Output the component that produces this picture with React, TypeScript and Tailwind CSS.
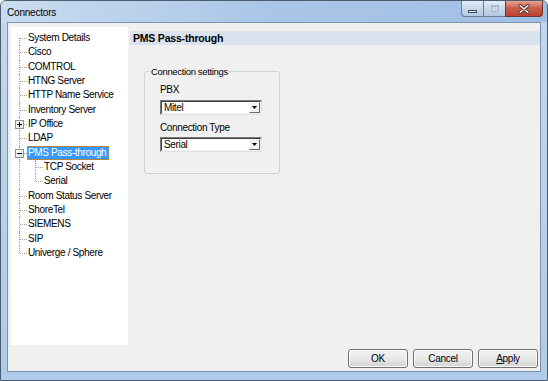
import React from 'react';

type Item = {
  label: string;
  level: 0 | 1;
  expander?: '+' | '-';
  selected?: boolean;
  rootLine: 'full' | 'top' | 'bottom';
  childLine?: 'full' | 'top';
};

const items: Item[] = [
  { label: 'System Details', level: 0, rootLine: 'bottom' },
  { label: 'Cisco', level: 0, rootLine: 'full' },
  { label: 'COMTROL', level: 0, rootLine: 'full' },
  { label: 'HTNG Server', level: 0, rootLine: 'full' },
  { label: 'HTTP Name Service', level: 0, rootLine: 'full' },
  { label: 'Inventory Server', level: 0, rootLine: 'full' },
  { label: 'IP Office', level: 0, rootLine: 'full', expander: '+' },
  { label: 'LDAP', level: 0, rootLine: 'full' },
  { label: 'PMS Pass-through', level: 0, rootLine: 'full', expander: '-', selected: true },
  { label: 'TCP Socket', level: 1, rootLine: 'full', childLine: 'full' },
  { label: 'Serial', level: 1, rootLine: 'full', childLine: 'top' },
  { label: 'Room Status Server', level: 0, rootLine: 'full' },
  { label: 'ShoreTel', level: 0, rootLine: 'full' },
  { label: 'SIEMENS', level: 0, rootLine: 'full' },
  { label: 'SIP', level: 0, rootLine: 'full' },
  { label: 'Univerge / Sphere', level: 0, rootLine: 'top' },
];

function LineCell({
  vert,
  horiz,
  expander,
}: {
  vert: 'full' | 'top' | 'bottom';
  horiz: boolean;
  expander?: '+' | '-';
}) {
  return (
    <div className="relative w-[16px] h-full shrink-0">
      {vert === 'full' && (
        <div className="absolute left-[8px] top-0 bottom-0 border-l border-dotted border-[#a0a0a0]" />
      )}
      {vert === 'top' && (
        <div className="absolute left-[8px] top-0 h-1/2 border-l border-dotted border-[#a0a0a0]" />
      )}
      {vert === 'bottom' && (
        <div className="absolute left-[8px] top-1/2 bottom-0 border-l border-dotted border-[#a0a0a0]" />
      )}
      {horiz && (
        <div className="absolute left-[9px] right-0 top-[7px] border-t border-dotted border-[#a0a0a0]" />
      )}
      {expander && (
        <div className="absolute left-[4px] top-[3px] w-[9px] h-[9px] border border-[#919191] bg-gradient-to-br from-white to-[#e2e2e2] flex items-center justify-center">
          <div className="relative w-[5px] h-[5px]">
            <div className="absolute left-0 right-0 top-[2px] h-[1px] bg-black" />
            {expander === '+' && <div className="absolute top-0 bottom-0 left-[2px] w-[1px] bg-black" />}
          </div>
        </div>
      )}
    </div>
  );
}

function TreeRow({ item }: { item: Item }) {
  return (
    <div className="flex h-[14.33px] items-stretch">
      {item.level === 0 ? (
        <LineCell vert={item.rootLine} horiz expander={item.expander} />
      ) : (
        <>
          <LineCell vert="full" horiz={false} />
          <LineCell vert={item.childLine ?? 'full'} horiz />
        </>
      )}
      <div
        className={
          item.selected
            ? 'flex items-center pl-0 pr-[2px] bg-[#3399ff] text-white border border-dotted border-[#c08a3c]'
            : 'flex items-center pl-[1px] pr-[3px] text-black'
        }
      >
        <span className="text-[10px] tracking-[-0.35px] leading-none whitespace-nowrap">{item.label}</span>
      </div>
    </div>
  );
}

function Select({ value }: { value: string }) {
  return (
    <div className="w-[102px] h-[15px] flex bg-white border border-t-[#7a7a7a] border-l-[#7a7a7a] border-r-[#e3e3e3] border-b-[#e3e3e3]">
      <div className="flex-1 flex border border-t-[#404040] border-l-[#404040] border-r-[#f0f0f0] border-b-[#f0f0f0]">
        <div className="flex-1 flex items-center pl-[2px] text-[10px] tracking-[-0.35px] leading-none text-black">
          {value}
        </div>
        <div className="w-[11px] h-full bg-[#f0f0f0] border border-t-[#fafafa] border-l-[#fafafa] border-r-[#6a6a6a] border-b-[#6a6a6a] flex items-center justify-center">
          <svg width="5" height="3" viewBox="0 0 5 3">
            <path d="M0 0h5L2.5 3z" fill="#000" />
          </svg>
        </div>
      </div>
    </div>
  );
}

function Button({ children }: { children: React.ReactNode }) {
  return (
    <button className="w-[60px] h-[19px] rounded-[3px] border border-[#707070] bg-gradient-to-b from-[#f3f3f3] via-[#e8e8e8] to-[#d4d4d4] shadow-[inset_0_0_0_1px_#fbfbfb] text-[10px] tracking-[-0.3px] leading-none text-black">
      {children}
    </button>
  );
}

export default function App() {
  return (
    <div className="w-[548px] h-[381px] flex flex-col rounded-t-[6px] border border-[#4d5d70] bg-gradient-to-b from-[#c3d8ef] to-[#aecbea] font-['Liberation_Sans',Arial,sans-serif]">
      {/* Title bar */}
      <div className="h-[21px] flex items-start rounded-t-[5px] bg-gradient-to-r from-[#cadcf0] via-[#a9c6e7] to-[#a0bfe4]">
        <div className="h-full flex items-center pl-[6px] pt-[1px] text-[10px] tracking-[-0.2px] text-black">Connectors</div>
        <div className="ml-auto mr-[4px] flex h-[16px]">
          <div className="w-[22px] h-full rounded-bl-[4px] border border-r-0 border-t-0 border-[#6b7d94] bg-gradient-to-b from-[#e4edf7] via-[#c8d8ea] to-[#b3c8e0] flex items-end justify-center pb-[3px]">
            <div className="w-[9px] h-[3px] bg-white border border-[#3c4a5c]" />
          </div>
          <div className="w-[22px] h-full border border-r-0 border-t-0 border-[#6b7d94] bg-gradient-to-b from-[#e4edf7] via-[#c8d8ea] to-[#b3c8e0] flex items-center justify-center">
            <div className="w-[8px] h-[7px] border border-[#a8b8cc] border-t-2" />
          </div>
          <div className="w-[38px] h-full rounded-br-[4px] border border-t-0 border-[#6b3a34] bg-gradient-to-b from-[#e6a392] via-[#c95a48] to-[#c0402e] flex items-center justify-center">
            <svg width="12" height="10" viewBox="0 0 12 10">
              <path d="M2 1.5L10 8.5M10 1.5L2 8.5" stroke="#4a2420" strokeWidth="3.2" strokeLinecap="round" />
              <path d="M2 1.5L10 8.5M10 1.5L2 8.5" stroke="#fff" strokeWidth="1.6" strokeLinecap="round" />
            </svg>
          </div>
        </div>
      </div>

      {/* Client area */}
      <div className="flex-1 ml-[6px] mr-[6px] mb-[8px] border border-[#7d93ad] bg-[#f0f0f0] flex flex-col">
        <div className="flex pt-[4px]">
          {/* Tree */}
          <div className="ml-[3px] w-[117px] h-[318px] bg-white pt-[4px]">
            {items.map((item) => (
              <TreeRow key={item.label} item={item} />
            ))}
          </div>

          {/* Right panel */}
          <div className="ml-[2px] flex-1 pt-[4px]">
            <div className="h-[14px] flex items-center pl-[3px] bg-[#dae3ed] text-[10.5px] tracking-[-0.2px] font-bold leading-none text-black">
              PMS Pass-through
            </div>
            <fieldset className="ml-[14px] mt-[21px] w-[136px] h-[108px] border border-[#cdd3d9] rounded-[3px] p-0">
              <legend className="ml-[5px] px-[1px] text-[9.5px] tracking-[-0.35px] leading-[11px] text-black">
                Connection settings
              </legend>
              <div className="pl-[15px]">
                <div className="pt-[7px] text-[10px] tracking-[-0.35px] leading-[11px] text-black">PBX</div>
                <div className="mt-[5px]">
                  <Select value="Mitel" />
                </div>
                <div className="mt-[7px] text-[10px] tracking-[-0.35px] leading-[11px] text-black">Connection Type</div>
                <div className="mt-[4px]">
                  <Select value="Serial" />
                </div>
              </div>
            </fieldset>
          </div>
        </div>

        {/* Buttons */}
        <div className="mt-[4px] pr-[2px] flex justify-end gap-[5px]">
          <Button>OK</Button>
          <Button>Cancel</Button>
          <Button>
            <span className="underline">A</span>pply
          </Button>
        </div>
      </div>
    </div>
  );
}
